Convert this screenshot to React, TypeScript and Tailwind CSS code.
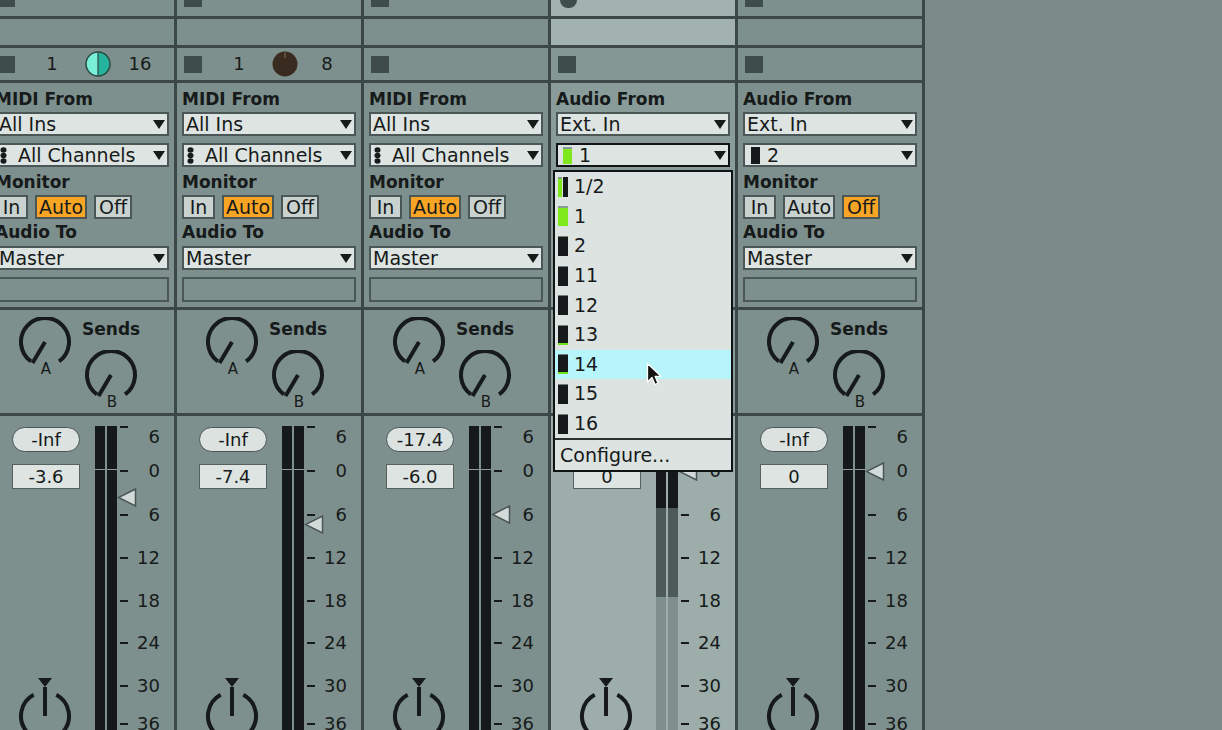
import React from "react";

const INK = "#161a1a";

type Track = {
  kind: "MIDI" | "Audio";
  input: string;
  channel: string;
  chanIcon: "chain" | "green" | "dark";
  monitor: "In" | "Auto" | "Off";
  head: "square" | "dot";
  io?: { knob: "teal" | "brown"; hi: string };
  peak: string;
  volume: string;
  fader: number;
  selected?: boolean;
  open?: boolean;
};

const TRACKS: Track[] = [
  { kind: "MIDI", input: "All Ins", channel: "All Channels", chanIcon: "chain", monitor: "Auto", head: "square", io: { knob: "teal", hi: "16" }, peak: "-Inf", volume: "-3.6", fader: 72 },
  { kind: "MIDI", input: "All Ins", channel: "All Channels", chanIcon: "chain", monitor: "Auto", head: "square", io: { knob: "brown", hi: "8" }, peak: "-Inf", volume: "-7.4", fader: 99 },
  { kind: "MIDI", input: "All Ins", channel: "All Channels", chanIcon: "chain", monitor: "Auto", head: "square", peak: "-17.4", volume: "-6.0", fader: 89 },
  { kind: "Audio", input: "Ext. In", channel: "1", chanIcon: "green", monitor: "Auto", head: "dot", peak: "-Inf", volume: "0", fader: 46, selected: true, open: true },
  { kind: "Audio", input: "Ext. In", channel: "2", chanIcon: "dark", monitor: "Off", head: "square", peak: "-Inf", volume: "0", fader: 46 },
];

// dB scale: [label, centre y inside the mixer section]
const SCALE: [string, number][] = [
  ["0", 54.5],
  ["6", 98.5],
  ["12", 141.5],
  ["18", 184.5],
  ["24", 226.5],
  ["30", 269.5],
  ["36", 307.5],
];

const INPUTS = ["1/2", "1", "2", "11", "12", "13", "14", "15", "16"];

function Caret() {
  return (
    <svg width="12" height="9" viewBox="0 0 12 9" className="mr-[2px] shrink-0">
      <polygon points="0,0 12,0 6,9" fill={INK} />
    </svg>
  );
}

function ChainIcon() {
  return (
    <svg width="7" height="17" viewBox="0 0 7 17" className="shrink-0">
      <ellipse cx="3.5" cy="3" rx="3" ry="2.8" fill={INK} />
      <ellipse cx="3.5" cy="8.5" rx="3" ry="2.8" fill={INK} />
      <ellipse cx="3.5" cy="14" rx="3" ry="2.8" fill={INK} />
    </svg>
  );
}

function InputMeter({ kind }: { kind: string }) {
  if (kind === "1/2") {
    return (
      <div className="flex h-[20px] w-[10px] shrink-0 gap-[1px]">
        <div className="flex w-[4px] flex-col">
          <div className="h-[2px] bg-[#8a9a97]" />
          <div className="flex-1 bg-[#7ee81c]" />
        </div>
        <div className="w-[5px] bg-[#151919]" />
      </div>
    );
  }
  if (kind === "green") {
    return (
      <div className="flex h-[20px] w-[10px] shrink-0 flex-col">
        <div className="h-[2px] bg-[#8a9a97]" />
        <div className="flex-1 bg-[#7ee81c]" />
      </div>
    );
  }
  return (
    <div className="flex h-[20px] w-[10px] shrink-0 flex-col">
      <div className="h-[1px] bg-[#6f7d7b]" />
      <div className="flex-1 bg-[#151919]" />
      {kind === "low" && <div className="h-[2px] bg-[#6fe21a]" />}
    </div>
  );
}

function Select({ children, focus }: { children: React.ReactNode; focus?: boolean }) {
  return (
    <div
      className={`flex h-[24px] w-[174px] items-center border-2 bg-[#dde4e1] text-[19px] leading-none text-[#161a1a] ${
        focus ? "border-[#111414]" : "border-[#4b5656]"
      }`}
    >
      <div className="flex flex-1 items-center pl-[2px]">{children}</div>
      <Caret />
    </div>
  );
}

function Label({ children, className = "" }: { children: React.ReactNode; className?: string }) {
  return <div className={`text-[17px] font-bold leading-[20px] text-[#161a1a] ${className}`}>{children}</div>;
}

function MonitorButtons({ active }: { active: string }) {
  const btns: [string, string][] = [
    ["In", "w-[33px]"],
    ["Auto", "w-[52px]"],
    ["Off", "w-[38px]"],
  ];
  return (
    <div className="mt-[3px] flex gap-[7px]">
      {btns.map(([name, w]) => (
        <div
          key={name}
          className={`flex h-[24px] items-center justify-center border-2 border-[#4b5656] text-[19px] leading-none text-[#161a1a] ${w} ${
            active === name ? "bg-[#f8a526]" : "bg-[#c9d2cf]"
          }`}
        >
          {name}
        </div>
      ))}
    </div>
  );
}

function ColorKnob({ tone }: { tone: "teal" | "brown" }) {
  if (tone === "brown") {
    return (
      <svg width="26" height="26" viewBox="0 0 26 26" className="shrink-0">
        <circle cx="13" cy="13" r="12.5" fill="#3a2b20" />
        <line x1="13" y1="1.5" x2="13" y2="7" stroke="#8c6d52" strokeWidth="1" />
      </svg>
    );
  }
  return (
    <svg width="26" height="26" viewBox="0 0 26 26" className="shrink-0">
      <path d="M13 1 A12 12 0 0 0 13 25 Z" fill="#79efd8" />
      <path d="M13 1 A12 12 0 0 1 13 25 Z" fill="#26b39b" />
      <line x1="13" y1="1" x2="13" y2="25" stroke="#2c4844" strokeWidth="1.2" />
      <circle cx="13" cy="13" r="12" fill="none" stroke="#2c4844" strokeWidth="1.5" />
    </svg>
  );
}

function SendKnob({ letter }: { letter: string }) {
  return (
    <svg width="56" height="60" viewBox="0 0 56 60" className="shrink-0">
      <path d="M13.9 44.4 A24 24 0 1 1 42.1 44.4" fill="none" stroke={INK} strokeWidth="4" />
      <line x1="28" y1="25" x2="15.5" y2="46" stroke={INK} strokeWidth="4" />
      <text x="29" y="57" textAnchor="middle" fontSize="15" fontFamily="'DejaVu Sans', sans-serif" fill={INK}>
        {letter}
      </text>
    </svg>
  );
}

function PanKnob() {
  return (
    <svg width="56" height="52" viewBox="0 0 56 52" className="ml-[5px] mt-auto shrink-0">
      <polygon points="21,0 35,0 28,9" fill={INK} />
      <path d="M39.3 16.8 A24 24 0 1 1 16.7 16.8" fill="none" stroke={INK} strokeWidth="4" />
      <line x1="28" y1="9" x2="28" y2="38" stroke={INK} strokeWidth="4" />
    </svg>
  );
}

function FaderArrow() {
  return (
    <svg width="20" height="19" viewBox="0 0 20 19">
      <polygon points="18.5,1 18.5,18 1.5,9.5" fill="#d3dbd8" stroke="#4a5555" strokeWidth="1.5" />
    </svg>
  );
}

function MeterBar({ lit }: { lit?: boolean }) {
  if (lit) {
    return (
      <div className="flex w-[10px] flex-col">
        <div className="h-[43px] bg-[#151919]" />
        <div className="h-[1px] bg-[#8c9c99]" />
        <div className="h-[38px] bg-[#151919]" />
        <div className="h-[89px] bg-[#4d5a59]" />
        <div className="flex-1 bg-[#7f8f8d]" />
      </div>
    );
  }
  return (
    <div className="flex w-[10px] flex-col">
      <div className="h-[43px] bg-[#151919]" />
      <div className="h-[1px] bg-[#8c9c99]" />
      <div className="flex-1 bg-[#151919]" />
    </div>
  );
}

function InputMenu() {
  return (
    <div className="absolute left-[2px] top-[170px] z-10 w-[180px] border-2 border-[#111414] bg-[#dce3e0] text-[19px] leading-none text-[#161a1a]">
      {INPUTS.map((name) => {
        const icon = name === "1/2" ? "1/2" : name === "1" ? "green" : name === "13" || name === "14" ? "low" : "dark";
        return (
          <div key={name} className={`flex h-[29.6px] items-center gap-[6px] pl-[3px] ${name === "14" ? "bg-[#b6f5fa]" : ""}`}>
            <InputMeter kind={icon} />
            <span>{name}</span>
          </div>
        );
      })}
      <div className="h-[2px] bg-[#2a3030]" />
      <div className="flex h-[30px] items-center pl-[5px]">Configure...</div>
    </div>
  );
}

function Cursor() {
  return (
    <svg width="16" height="25" viewBox="0 0 16 25" className="absolute left-[95px] top-[362px] z-20">
      <path d="M1.5 1.5 L1.5 20 L6 15.5 L9 22.5 L12 21.2 L9.1 14.3 L15 14.3 Z" fill="#111" stroke="#fff" strokeWidth="1.3" strokeLinejoin="round" />
    </svg>
  );
}

function Strip({ t }: { t: Track }) {
  const sel = t.selected;
  const line = "border-[#3c4848]";
  return (
    <div className={`relative flex h-[730px] w-[187px] shrink-0 flex-col border-r-[3px] ${line} ${sel ? "bg-[#8a9c99]" : "bg-[#7e908d]"}`}>
      {/* clip slot stop row */}
      <div className={`h-[19px] border-b-[3px] ${line} ${sel ? "bg-[#a1b2af]" : ""}`}>
        {t.head === "dot" ? (
          <div className="ml-[9px] h-[8px] w-[17px] rounded-b-full bg-[#3e4c4c]" />
        ) : (
          <div className="ml-[7px] h-[7px] w-[18px] bg-[#3e4c4c]" />
        )}
      </div>
      <div className={`h-[29px] border-b-[3px] ${line} ${sel ? "bg-[#a1b2af]" : ""}`} />
      {/* track status row */}
      <div className={`flex h-[35px] items-center border-b-[3px] text-[18px] leading-none text-[#161a1a] ${line} ${sel ? "bg-[#859794]" : ""}`}>
        <div className="ml-[7px] h-[17px] w-[18px] bg-[#3e4c4c]" />
        {t.io && (
          <>
            <span className="ml-[25px] w-[24px] text-center">1</span>
            <span className="ml-[21px]">
              <ColorKnob tone={t.io.knob} />
            </span>
            <span className="ml-[9px] w-[40px] text-center">{t.io.hi}</span>
          </>
        )}
      </div>

      {/* I/O section */}
      <div className={`h-[227px] border-b-[3px] px-[5px] ${line}`}>
        <Label className="pt-[6px]">{t.kind} From</Label>
        <div className="mt-[3px]">
          <Select>{t.input}</Select>
        </div>
        <div className="mt-[7px]">
          <Select focus={t.open}>
            {t.chanIcon === "chain" && (
              <>
                <span className="ml-[1px]">
                  <ChainIcon />
                </span>
                <span className="ml-[11px]">{t.channel}</span>
              </>
            )}
            {t.chanIcon === "green" && (
              <>
                <span className="ml-[3px] flex h-[17px] w-[9px] flex-col">
                  <span className="h-[2px] bg-[#8a9a97]" />
                  <span className="flex-1 bg-[#7ee81c]" />
                </span>
                <span className="ml-[7px]">{t.channel}</span>
              </>
            )}
            {t.chanIcon === "dark" && (
              <>
                <span className="ml-[4px] h-[17px] w-[9px] bg-[#151919]" />
                <span className="ml-[7px]">{t.channel}</span>
              </>
            )}
          </Select>
        </div>
        <Label className="mt-[5px]">Monitor</Label>
        <MonitorButtons active={t.monitor} />
        <Label className="mt-[3px]">Audio To</Label>
        <div className="mt-[4px]">
          <Select>Master</Select>
        </div>
        <div className="mt-[7px] h-[25px] w-[174px] border-2 border-[#4b5656]" />
      </div>

      {/* sends */}
      <div className={`flex h-[106px] border-b-[3px] ${line}`}>
        <div className="ml-[27px] mt-[7px]">
          <SendKnob letter="A" />
        </div>
        <div className="ml-[9px] flex flex-col">
          <div className="pt-[9px] text-[17px] font-bold leading-[20px] text-[#161a1a]">Sends</div>
          <div className="ml-[1px] mt-[11px]">
            <SendKnob letter="B" />
          </div>
        </div>
      </div>

      {/* mixer */}
      <div className={`relative flex flex-1 overflow-hidden ${sel ? "bg-[#9cadaa]" : ""}`}>
        <div className="flex w-[105px] shrink-0 flex-col pl-[22px] pt-[11px] text-[18px] leading-none text-[#161a1a]">
          <div className="flex h-[25px] w-[68px] items-center justify-center rounded-full border-[1.5px] border-[#4a5555] bg-[#dbe2df]">
            {t.peak}
          </div>
          <div className="mt-[12px] flex h-[25px] w-[68px] items-center justify-center border-[1.5px] border-[#56615f] bg-[#dde4e1]">
            {t.volume}
          </div>
          <PanKnob />
        </div>
        <div className="flex gap-[2px] pt-[10px]">
          <MeterBar lit={sel} />
          <MeterBar lit={sel} />
        </div>
        <div className="relative w-[45px] text-[18px] leading-[20px] text-[#161a1a]">
          <div className="absolute left-[3px] top-[10px] h-[2px] w-[8px] bg-[#161a1a]" />
          <span className="absolute right-[2px] top-[11px]">6</span>
          {SCALE.map(([label, y]) => (
            <React.Fragment key={label}>
              <div className="absolute left-[3px] h-[2px] w-[8px] bg-[#161a1a]" style={{ top: y - 1 }} />
              <span className="absolute right-[2px]" style={{ top: y - 10 }}>
                {label}
              </span>
            </React.Fragment>
          ))}
        </div>
        <div className="absolute left-[127px]" style={{ top: t.fader }}>
          <FaderArrow />
        </div>
      </div>

      {t.open && (
        <>
          <InputMenu />
          <Cursor />
        </>
      )}
    </div>
  );
}

export default function App() {
  return (
    <div className="flex h-[730px] w-full overflow-hidden bg-[#7b8b89] font-['DejaVu_Sans',sans-serif]">
      <div className="-ml-[10px] flex shrink-0">
        {TRACKS.map((t, i) => (
          <Strip key={i} t={t} />
        ))}
      </div>
      <div className="flex-1" />
    </div>
  );
}
